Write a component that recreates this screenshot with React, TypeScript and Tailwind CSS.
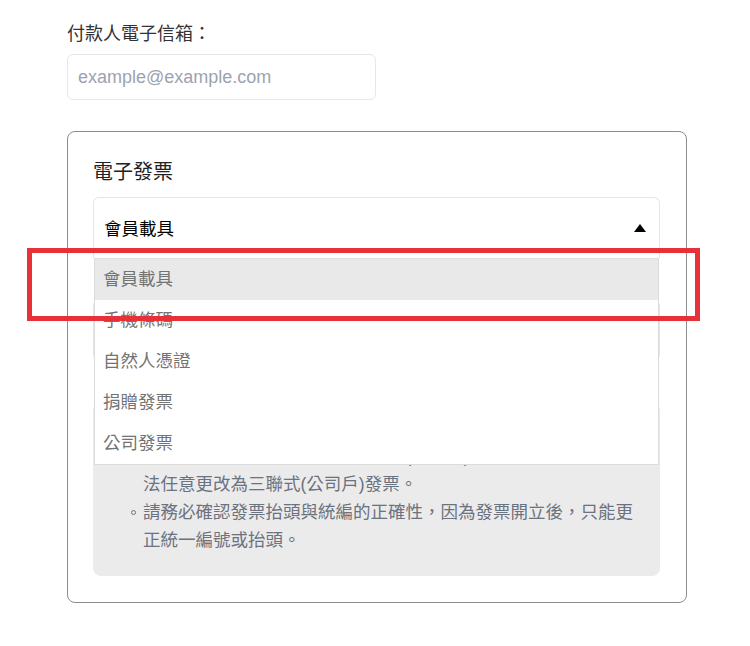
import React from "react";

const items = ["會員載具", "手機條碼", "自然人憑證", "捐贈發票", "公司發票"];

function Bullet() {
  return (
    <div className="w-[12px] shrink-0 h-[28px] flex items-center">
      <div className="w-[5px] h-[5px] rounded-full border border-[#6b7280] mt-[1px]" />
    </div>
  );
}

export default function App() {
  return (
    <div className="relative w-[750px] h-[646px] bg-white overflow-hidden font-['Liberation_Sans','Noto_Sans_CJK_TC',sans-serif]">
      <div className="pl-[67px] pt-[20px]">
        <div className="text-[18px] leading-[28px] text-[#333333]">付款人電子信箱：</div>
        <div className="mt-[6px] w-[309px] h-[46px] border border-[#e5e7eb] rounded-[6px] flex items-center pl-[10px]">
          <span className="text-[18px] text-[#9ca3af]">example@example.com</span>
        </div>

        <div className="mt-[31px] w-[620px] h-[472px] border border-[#8c8c8c] rounded-[8px] pl-[25px] pr-[26px] pt-[25px]">
          <div className="text-[20px] leading-[30px] text-[#222222]">電子發票</div>

          <div className="relative mt-[10px] h-[61px] border border-[#e5e5e5] border-b-0 rounded-t-[6px] flex items-center justify-between pl-[10px] pr-[13px] pt-[3px]">
            <span className="text-[17.5px] text-black">會員載具</span>
            <svg width="12" height="8" viewBox="0 0 12 8" className="mb-[4px]">
              <polygon points="6,0 12,8 0,8" fill="#000" />
            </svg>
            <div className="absolute left-0 right-0 top-[60px] z-10 bg-white border border-[#dcdcdc]">
              {items.map((t, i) => (
                <div
                  key={t}
                  className={
                    i === 0
                      ? "h-[41px] flex items-center pl-[8px] bg-[#e9e9e9] text-[17.5px] text-[#737373]"
                      : "h-[41px] flex items-center pl-[8px] bg-white text-[17.5px] text-[#737373]"
                  }
                >
                  {t}
                </div>
              ))}
            </div>
          </div>

          <div className="mt-[42px] h-[61px] border border-[#e5e5e5] rounded-[6px]" />

          <div className="mt-[41px] h-[174px] bg-[#ebebeb] rounded-[8px] pl-[38px] pt-[12px] text-[17.5px] leading-[28px] text-[#6b7280]">
            <div className="h-[28px]">發票注意事項：</div>
            <div className="flex">
              <Bullet />
              <div className="whitespace-nowrap">
                依統一發票使用辦法規定，二聯式(個人戶)發票一經開立，無
                <br />
                法任意更改為三聯式(公司戶)發票。
              </div>
            </div>
            <div className="flex">
              <Bullet />
              <div className="whitespace-nowrap">
                請務必確認發票抬頭與統編的正確性，因為發票開立後，只能更
                <br />
                正統一編號或抬頭。
              </div>
            </div>
          </div>
        </div>
      </div>

      <div className="absolute left-[27px] top-[248px] w-[673px] h-[73px] border-[5px] border-[#e53137] z-20" />
    </div>
  );
}
